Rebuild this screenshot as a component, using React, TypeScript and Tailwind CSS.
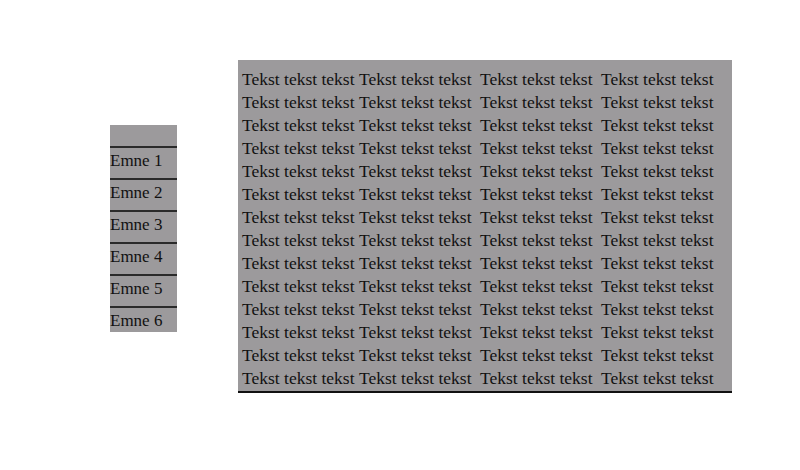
import React from 'react';

const topics = ['Emne 1', 'Emne 2', 'Emne 3', 'Emne 4', 'Emne 5', 'Emne 6'];
const rows = Array.from({ length: 14 }, (_, i) => i);
const cols = [0, 1, 2, 3];

const SideMenu: React.FC = () => (
    <div className="w-[67px] bg-[#9c9a9c] mt-[65px]">
        <div className="h-[21px]"></div>
        {topics.map((topic, index) => (
            <div
                key={topic}
                className={`border-t-2 border-[#2a2a2a] h-[26px] leading-[26px] ${index < topics.length - 1 ? 'mb-[6px]' : ''}`}
            >
                {topic}
            </div>
        ))}
    </div>
);

const TextPanel: React.FC = () => (
    <div className="w-[494px] h-[333px] bg-[#9c9a9c] border-b-2 border-[#111] ml-[61px] pt-[8px] pl-[4px] text-[17.5px]">
        {rows.map((row) => (
            <div key={row} className="grid grid-cols-[117px_121px_121px_auto] h-[23px] leading-[23px]">
                {cols.map((col) => (
                    <span key={col} className="whitespace-nowrap">Tekst tekst tekst</span>
                ))}
            </div>
        ))}
    </div>
);

export default function App() {
    return (
        <div
            className="w-[800px] h-[470px] bg-white flex items-start pt-[60px] pl-[110px] text-[17px] text-[#111]"
            style={{ fontFamily: '"Liberation Serif", "Times New Roman", serif' }}
        >
            <SideMenu />
            <TextPanel />
        </div>
    );
}
